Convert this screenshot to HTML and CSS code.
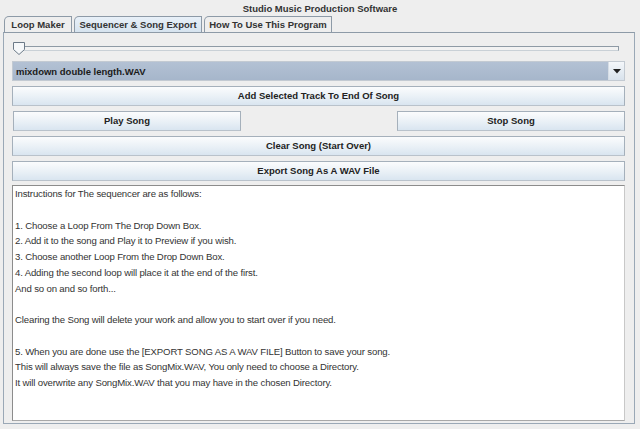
FILE: index.html
```html
<!DOCTYPE html>
<html lang="en">
     <head>
          <meta http-equiv="Content-type" content="text/html; charset=utf-8">
          <title>Studio Music Production Software</title>
          <link rel="stylesheet" href="styles.css">
     </head>
     <body>
          <div class="title">Studio Music Production Software</div>
          <div class="tabs">
               <div class="tab loop">Loop Maker</div>
               <div class="tab selected">Sequencer &amp; Song Export</div>
               <div class="tab">How To Use This Program</div>
          </div>
          <div class="panel">
               <div class="slider">
                    <svg class="thumb" width="12" height="13" viewBox="0 0 12 13">
                         <path d="M0.5 0.5 H11.5 V7.5 L6 12.5 L0.5 7.5 Z" fill="#f6f8fa" stroke="#6c7a88"/>
                    </svg>
                    <div class="track"></div>
               </div>
               <div class="combo">
                    <span class="combo-text">mixdown double length.WAV</span>
                    <div class="combo-arrow">
                         <svg width="8" height="5" viewBox="0 0 8 5"><path d="M0 0 H8 L4 4.5 Z" fill="#222"/></svg>
                    </div>
               </div>
               <div class="btn">Add Selected Track To End Of Song</div>
               <div class="btn-row">
                    <div class="btn half">Play Song</div>
                    <div class="btn half">Stop Song</div>
               </div>
               <div class="btn">Clear Song (Start Over)</div>
               <div class="btn">Export Song As A WAV File</div>
               <div class="text-area">Instructions for The sequencer are as follows:

1. Choose a Loop From The Drop Down Box.
2. Add it to the song and Play it to Preview if you wish.
3. Choose another Loop From the Drop Down Box.
4. Adding the second loop will place it at the end of the first.
And so on and so forth...

Clearing the Song will delete your work and allow you to start over if you need.

5. When you are done use the [EXPORT SONG AS A WAV FILE] Button to save your song.
This will always save the file as SongMix.WAV, You only need to choose a Directory.
It will overwrite any SongMix.WAV that you may have in the chosen Directory.</div>
          </div>
     </body>
</html>
```

FILE: styles.css
```css
html{
     height: 100%;
}
body{
     margin: 0;
     padding: 0;
     height: 100%;
     background-color: #eeeeee;
     font-family: "Liberation Sans", Arial, sans-serif;
     font-size: 9.5px;
     color: #222;
     overflow: hidden;
}
.title{
     height: 16px;
     line-height: 17px;
     text-align: center;
     font-weight: bold;
     color: #333;
}
.tabs{
     display: flex;
     height: 16px;
     padding-left: 4px;
     gap: 2px;
}
.tab{
     width: 128px;
     height: 16px;
     line-height: 16px;
     box-sizing: border-box;
     border: 1px solid #8d9aa7;
     border-bottom: none;
     border-top-left-radius: 5px;
     text-align: center;
     font-weight: bold;
     color: #333;
     background-color: #eeeeee;
}
.tab.loop{
     width: 68px;
}
.tab.selected{
     background: linear-gradient(#e8f0f8, #d6e3ef);
}
.panel{
     margin-left: 3px;
     width: 632px;
     height: 392px;
     box-sizing: border-box;
     border: 1px solid #9aa8b6;
     border-top-color: #8d9aa7;
     padding: 8px 9px 0 8px;
     display: flex;
     flex-direction: column;
}
.slider{
     height: 15px;
     position: relative;
     display: flex;
     align-items: center;
}
.thumb{
     position: absolute;
     left: 1px;
     top: 1px;
}
.track{
     margin-left: 9px;
     width: 596px;
     height: 3px;
     border: 1px solid #8e9aa5;
     border-bottom-color: #c9d0d6;
     background-color: #f2f2f2;
}
.combo{
     margin-top: 5px;
     height: 20px;
     box-sizing: border-box;
     border: 1px solid #c3cad2;
     background: linear-gradient(#b3c1d4, #a6b6cb);
     display: flex;
     align-items: center;
     justify-content: space-between;
}
.combo-text{
     padding-left: 3px;
     font-weight: bold;
     color: #1a1a1a;
}
.combo-arrow{
     width: 16px;
     height: 18px;
     box-sizing: border-box;
     border-left: 1px solid #d6dde5;
     background: linear-gradient(#f4f7fa, #d8e2ec);
     display: flex;
     align-items: center;
     justify-content: center;
}
.btn{
     margin-top: 5px;
     height: 20px;
     line-height: 18px;
     box-sizing: border-box;
     border: 1px solid #a5b0bb;
     border-bottom-color: #b9c2cb;
     background: linear-gradient(#fbfcfd, #e9f0f6 55%, #d9e5f0);
     text-align: center;
     font-weight: bold;
     color: #222;
}
.btn-row{
     display: flex;
     justify-content: space-between;
     padding-left: 1px;
}
.btn.half{
     width: 228px;
}
.text-area{
     margin-top: 4px;
     height: 236px;
     box-sizing: border-box;
     border: 1px solid #8c8c8c;
     border-right-color: #c8c8c8;
     border-bottom-color: #a8a8a8;
     background-color: #ffffff;
     padding: 0 2px;
     white-space: pre;
     line-height: 15.75px;
     font-size: 9.6px;
     letter-spacing: -0.15px;
     color: #333;
}
```
